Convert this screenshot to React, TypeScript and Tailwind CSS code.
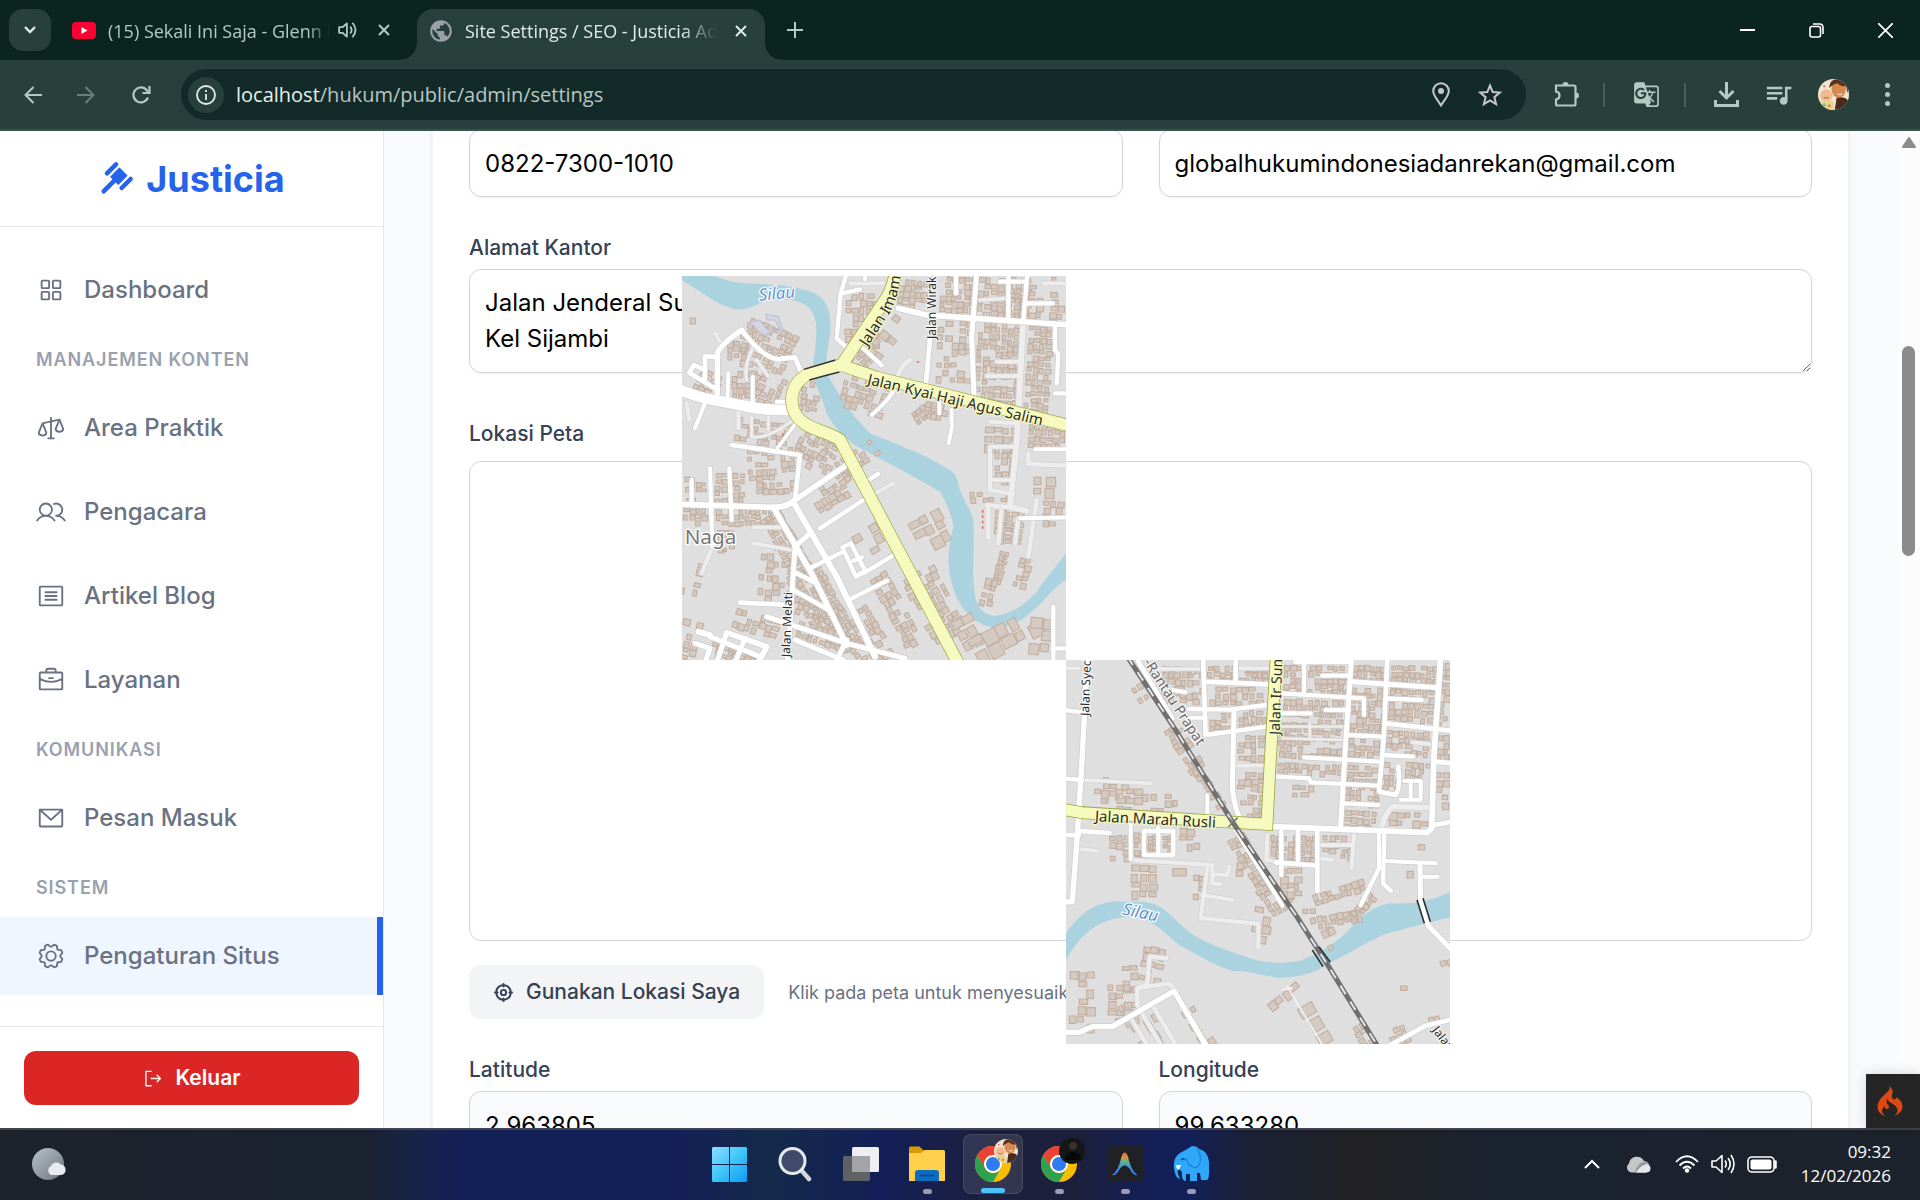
import { useState } from "react";
import type { ReactNode } from "react";
import {
  PiArticle,
  PiBriefcase,
  PiCrosshairBold,
  PiEnvelopeSimple,
  PiGavelFill,
  PiGear,
  PiScales,
  PiSignOut,
  PiSquaresFour,
  PiUsers,
} from "react-icons/pi";
import { SiCodeigniter } from "react-icons/si";
import { MdGTranslate, MdPublic, MdQueueMusic } from "react-icons/md";

const NAV_GROUPS = [
  {
    title: "",
    items: [{ label: "Dashboard", icon: PiSquaresFour, active: false }],
  },
  {
    title: "Manajemen Konten",
    items: [
      { label: "Area Praktik", icon: PiScales, active: false },
      { label: "Pengacara", icon: PiUsers, active: false },
      { label: "Artikel Blog", icon: PiArticle, active: false },
      { label: "Layanan", icon: PiBriefcase, active: false },
    ],
  },
  {
    title: "Komunikasi",
    items: [{ label: "Pesan Masuk", icon: PiEnvelopeSimple, active: false }],
  },
  {
    title: "Sistem",
    items: [{ label: "Pengaturan Situs", icon: PiGear, active: true }],
  },
];

/* ---------- Browser chrome ---------- */

function CloseGlyph({ className }: { className: string }) {
  return (
    <svg viewBox="0 0 12 12" className={className} fill="none" stroke="currentColor" strokeWidth="2">
      <path d="M1 1l10 10M11 1L1 11" />
    </svg>
  );
}

function TabStrip() {
  return (
    <div className="flex h-[60px] shrink-0 items-center bg-[#0a2520] pl-[9px] font-['Open_Sans',sans-serif] text-[18px]">
      <button aria-label="Cari tab" className="flex size-[42px] shrink-0 items-center justify-center rounded-[14px] bg-[#28403b]">
        <svg viewBox="0 0 12 8" className="h-2 w-3" fill="none" stroke="#e3ece9" strokeWidth="2.4">
          <path d="M1 1l5 5 5-5" />
        </svg>
      </button>

      <div className="ml-[21px] flex h-full w-[345px] shrink-0 items-center text-[#b3cac3]">
        <svg viewBox="0 0 24 17" className="h-[17px] w-6 shrink-0">
          <rect width="24" height="17" rx="4" fill="#ff0033" />
          <path d="M9.500 5v7l6-3.500z" fill="#fff" />
        </svg>
        <span className="ml-3 w-[222px] overflow-hidden pt-[2px] whitespace-nowrap [mask-image:linear-gradient(to_right,#000_90%,transparent)]">
          (15) Sekali Ini Saja - Glenn Fredly
        </span>
        <svg viewBox="0 0 18 16" className="ml-2 h-[18px] w-5 shrink-0" fill="none" stroke="currentColor" strokeWidth="1.6">
          <path d="M1 5.500h3L8 2v12L4 10.500H1z" strokeLinejoin="round" />
          <path d="M11 5q2.500 3 0 6M13 1.500q5.500 6.500 0 13" />
        </svg>
        <button aria-label="Tutup tab" className="ml-5">
          <CloseGlyph className="size-3" />
        </button>
      </div>

      <div className="relative mt-[9px] flex h-[51px] w-[348px] shrink-0 items-center rounded-t-[16px] bg-[#28403b] pb-2 text-[#e1ebe8]">
        <span className="absolute bottom-0 -left-4 size-4 bg-[radial-gradient(circle_at_0_0,transparent_15px,#28403b_16px)]" />
        <span className="absolute -right-4 bottom-0 size-4 bg-[radial-gradient(circle_at_100%_0,transparent_15px,#28403b_16px)]" />
        <MdPublic className="ml-[11px] size-[26px] shrink-0 text-[#9aa0a6]" />
        <span className="ml-[11px] w-[252px] overflow-hidden pt-[2px] whitespace-nowrap [mask-image:linear-gradient(to_right,#000_86%,transparent)]">
          Site Settings / SEO - Justicia Admin
        </span>
        <button aria-label="Tutup tab" className="ml-[18px]">
          <CloseGlyph className="size-3" />
        </button>
      </div>

      <button aria-label="Tab baru" className="ml-[22px] text-[#b3cac3]">
        <svg viewBox="0 0 16 16" className="size-4" fill="none" stroke="currentColor" strokeWidth="2">
          <path d="M8 0v16M0 8h16" />
        </svg>
      </button>

      <div className="ml-auto flex text-white">
        <button aria-label="Minimalkan" className="flex w-[69px] justify-center">
          <svg viewBox="0 0 15 15" className="size-[15px]" fill="none" stroke="currentColor" strokeWidth="2">
            <path d="M0 7h15" />
          </svg>
        </button>
        <button aria-label="Pulihkan" className="flex w-[69px] justify-center">
          <svg viewBox="0 0 15 15" className="size-[15px]" fill="none" stroke="currentColor" strokeWidth="1.600">
            <rect x="1" y="3.500" width="10.500" height="10.500" rx="2" />
            <path d="M4 1h6.500Q14 1 14 4.500V11" />
          </svg>
        </button>
        <button aria-label="Tutup" className="flex w-[69px] justify-center">
          <svg viewBox="0 0 15 15" className="size-[15px]" fill="none" stroke="currentColor" strokeWidth="1.700">
            <path d="M0 0l15 15M15 0L0 15" />
          </svg>
        </button>
      </div>
    </div>
  );
}

function ProfilePicture({ className }: { className: string }) {
  return (
    <svg viewBox="0 0 30 30" className={className}>
      <clipPath id="profile">
        <circle cx="15" cy="15" r="15" />
      </clipPath>
      <g clipPath="url(#profile)">
        <rect width="30" height="30" fill="#f3e6cf" />
        <path d="M18 18q10-2 13 6v8H16z" fill="#4a2a1c" />
        <ellipse cx="20" cy="10" rx="7" ry="8" fill="#d8894f" />
        <path d="M11 9q0-10 10-9 10 1 8 14l-2-7q-6 0-8-3-5 1-8 5z" fill="#5b3220" />
        <path d="M17 13q4 3 7 0-2 5-7 0z" fill="#fff" />
        <circle cx="8" cy="16" r="6" fill="#f2b993" />
        <path d="M5.500 17.500q2.500 2 5 0" fill="none" stroke="#a8603f" strokeWidth="1" />
        <path d="M1 22q7-3 14 0l1 9H2z" fill="#e5d58f" />
        <circle cx="6" cy="25" r="1.500" fill="#6fb7a8" />
        <circle cx="11" cy="26" r="1.500" fill="#e08b3c" />
        <circle cx="6" cy="7" r="1" fill="#d55" />
      </g>
    </svg>
  );
}

function Toolbar() {
  return (
    <div className="flex h-[71px] shrink-0 items-center border-b-2 border-[#3a524c] bg-[#28403b] pr-[30px] text-[#b3cac3]">
      <button aria-label="Kembali" className="flex w-[66px] justify-center">
        <svg viewBox="0 0 18 18" className="size-[18px]" fill="none" stroke="currentColor" strokeWidth="2">
          <path d="M18 9H2M9.500 1L1.500 9l8 8" />
        </svg>
      </button>
      <button aria-label="Maju" className="flex w-[40px] justify-center text-[#6b7f79]">
        <svg viewBox="0 0 18 18" className="size-[18px]" fill="none" stroke="currentColor" strokeWidth="2">
          <path d="M0 9h16M8.500 1l8 8-8 8" />
        </svg>
      </button>
      <button aria-label="Muat ulang" className="flex w-[70px] justify-center">
        <svg viewBox="0 0 20 20" className="size-5" fill="none" stroke="currentColor" strokeWidth="2.200">
          <path d="M17 12.500A7.500 7.500 0 1 1 16 5.500L18 8" />
          <path d="M18.500 1v7h-7" />
        </svg>
      </button>

      <div className="ml-[5px] flex h-[51px] flex-1 items-center rounded-full bg-[#132b28] pr-6 pl-[7px]">
        <button aria-label="Informasi situs" className="flex size-9 shrink-0 items-center justify-center rounded-full bg-[#28403b] text-[#e1ebe8]">
          <svg viewBox="0 0 20 20" className="size-5" fill="none" stroke="currentColor" strokeWidth="1.800">
            <circle cx="10" cy="10" r="9" />
            <path d="M10 9v6M10 5v2" />
          </svg>
        </button>
        <span className="ml-3 flex-1 font-['Open_Sans',sans-serif] text-[20px] whitespace-nowrap text-[#b9c6c2]">
          <span className="text-[#e6f0ed]">localhost</span>/hukum/public/admin/settings
        </span>
        <button aria-label="Lokasi" className="text-[#c7c7c7]">
          <svg viewBox="0 0 18 25" className="h-[25px] w-[18px]" fill="none" stroke="currentColor" strokeWidth="2">
            <path d="M9 23.500C5 17 1.200 13.500 1.200 9a7.800 7.800 0 0 1 15.600 0c0 4.500-3.800 8-7.800 14.500z" />
            <circle cx="9" cy="9" r="3" fill="currentColor" stroke="none" />
          </svg>
        </button>
        <button aria-label="Tambahkan bookmark" className="ml-7 text-[#c7c7c7]">
          <svg viewBox="0 0 24 24" className="size-6" fill="none" stroke="currentColor" strokeWidth="2">
            <path d="M12 2.500l2.700 6.600 7.100.5-5.400 4.600 1.700 6.900L12 17.400l-6.100 3.700 1.700-6.900-5.400-4.600 7.100-.5z" />
          </svg>
        </button>
      </div>

      <button aria-label="Ekstensi" className="ml-7">
        <svg viewBox="0 0 25 25" className="size-[25px]" fill="none" stroke="currentColor" strokeWidth="2.200">
          <path d="M2 3.500h18q1.500 0 1.500 1.500v17q0 1.500-1.500 1.500H3.500Q2 23.500 2 22v-4.500q3.500-.5 3.500-4T2 9.500z" />
          <path d="M8.500 3a3 3 0 0 1 6 0zM22 10.500a3 3 0 0 1 0 6z" fill="currentColor" stroke="none" />
        </svg>
      </button>
      <span className="ml-6 h-6 w-[2px] bg-[#47605a]" />
      <button aria-label="Terjemahkan" className="ml-7">
        <MdGTranslate className="size-[27px]" />
      </button>
      <span className="ml-6 h-6 w-[2px] bg-[#47605a]" />
      <button aria-label="Unduhan" className="ml-7">
        <svg viewBox="0 0 25 25" className="size-[25px]" fill="none" stroke="currentColor" strokeWidth="3">
          <path d="M12.500 0v15M5.500 9l7 7 7-7M1.500 18v5.500h22V18" />
        </svg>
      </button>
      <button aria-label="Kontrol media" className="ml-6">
        <MdQueueMusic className="size-[31px]" />
      </button>
      <button aria-label="Profil" className="ml-6">
        <ProfilePicture className="size-[31px]" />
      </button>
      <button aria-label="Menu" className="ml-9 flex flex-col items-center gap-1">
        <span className="size-[5px] rounded-full bg-current" />
        <span className="size-[5px] rounded-full bg-current" />
        <span className="size-[5px] rounded-full bg-current" />
      </button>
    </div>
  );
}

/* ---------- Sidebar ---------- */

function Sidebar() {
  return (
    <aside className="flex w-96 shrink-0 flex-col border-r border-gray-200 bg-white">
      <a href="#" className="flex h-24 shrink-0 items-center justify-center border-b border-gray-200 text-[36px] font-bold text-[#2563eb]">
        <PiGavelFill className="mr-3 size-9" />
        Justicia
      </a>

      <nav className="flex flex-1 flex-col gap-[6px] pt-6">
        {NAV_GROUPS.map((group) => (
          <div key={group.title} className="flex flex-col gap-[6px]">
            {group.title && (
              <div className="flex h-12 items-center px-9 text-[18px] font-semibold tracking-wider text-gray-400 uppercase">
                {group.title}
              </div>
            )}
            {group.items.map((item) => {
              const Icon = item.icon;
              return (
                <a
                  key={item.label}
                  href="#"
                  className={
                    item.active
                      ? "flex h-[78px] items-center border-r-6 border-[#2563eb] bg-[#eff6ff] px-9 text-[24px] font-medium text-gray-500"
                      : "flex h-[78px] items-center px-9 text-[24px] font-medium text-gray-500"
                  }
                >
                  <Icon className="mr-[18px] size-[30px]" />
                  {item.label}
                </a>
              );
            })}
          </div>
        ))}
      </nav>

      <div className="border-t border-gray-200 px-6 pt-6 pb-[23px]">
        <button className="flex h-[54px] w-full items-center justify-center gap-3 rounded-xl bg-[#dc2626] text-[21px] font-semibold text-white">
          <PiSignOut className="size-[21px]" />
          Keluar
        </button>
      </div>
    </aside>
  );
}

/* ---------- Map tiles ---------- */

type Road = { d: string; w: number };

// x, y, width, height, rotation, cell size, density
type Cluster = [number, number, number, number, number, number, number];

function seeded(seed: number) {
  let s = seed;
  return () => {
    s = (s * 16807) % 2147483647;
    return s / 2147483647;
  };
}

// Rows of small footprints that fill a block between streets
function footprints([, , w, h, , cell, density]: Cluster, seed: number) {
  const rand = seeded(seed * 7919 + 17);
  let d = "";
  for (let y = 0; y < h; y += cell) {
    for (let x = 0; x < w; x += cell) {
      const bw = Math.round(cell * (0.55 + rand() * 0.5));
      const bh = Math.round(cell * (0.5 + rand() * 0.5));
      const ox = Math.round(x + rand() * 5);
      const oy = Math.round(y + rand() * 5);
      if (rand() < density + 0.08) d += `M${ox} ${oy}h${bw}v${bh}h${-bw}z`;
    }
  }
  return d;
}

function Buildings({ clusters }: { clusters: Cluster[] }) {
  return (
    <g fill="#d5cac1" stroke="#c3b0a2" strokeWidth="3.5">
      {clusters.map((c, i) => (
        <path key={i} d={footprints(c, i + 1)} transform={`translate(${c[0]} ${c[1]}) rotate(${c[4]})`} />
      ))}
    </g>
  );
}

function Roads({ roads, casing, fill }: { roads: Road[]; casing: string; fill: string }) {
  return (
    <g fill="none" strokeLinecap="round" strokeLinejoin="round">
      {roads.map((r) => (
        <path key={r.d} d={r.d} stroke={casing} strokeWidth={r.w + 4} />
      ))}
      {roads.map((r) => (
        <path key={r.d} d={r.d} stroke={fill} strokeWidth={r.w} />
      ))}
    </g>
  );
}

const HALO = { paintOrder: "stroke", strokeLinejoin: "round" } as const;

const NORTH_BUILDINGS: Cluster[] = [
  [215, 140, 150, 120, 22, 19, 0.8],
  [30, 140, 60, 20, 0, 24, 0.4],
  [70, 290, 60, 60, 28, 18, 0.7],
  [155, 300, 60, 90, 0, 18, 0.7],
  [235, 290, 100, 90, 25, 20, 0.6],
  [140, 190, 80, 90, 0, 20, 0.5],
  [495, 70, 100, 150, 0, 21, 0.65],
  [620, 110, 90, 130, 38, 30, 0.5],
  [655, 25, 85, 80, 4, 18, 0.8],
  [780, 20, 95, 100, 2, 18, 0.75],
  [895, 20, 85, 120, 3, 20, 0.8],
  [990, 20, 50, 120, 3, 16, 0.8],
  [1050, 20, 105, 130, 2, 21, 0.5],
  [775, 150, 90, 180, 3, 21, 0.6],
  [895, 150, 120, 110, 3, 18, 0.65],
  [890, 270, 120, 150, 3, 19, 0.7],
  [1045, 165, 70, 270, 3, 18, 0.75],
  [530, 210, 80, 60, 40, 16, 0.8],
  [500, 310, 130, 90, 18, 20, 0.65],
  [690, 430, 50, 40, -35, 16, 0.8],
  [740, 390, 70, 50, 12, 18, 0.7],
  [370, 330, 40, 90, 10, 18, 0.6],
  [385, 465, 100, 50, 27, 18, 0.7],
  [360, 500, 120, 60, 27, 18, 0.6],
  [170, 440, 150, 60, 8, 18, 0.6],
  [200, 540, 140, 130, -4, 20, 0.6],
  [15, 620, 60, 70, 0, 16, 0.6],
  [105, 610, 85, 80, 0, 18, 0.8],
  [10, 715, 70, 50, 0, 18, 0.6],
  [108, 718, 160, 45, 0, 17, 0.75],
  [110, 780, 50, 60, 0, 18, 0.7],
  [20, 850, 60, 120, 12, 20, 0.4],
  [240, 850, 90, 130, 3, 21, 0.6],
  [300, 715, 200, 55, 60, 18, 0.85],
  [400, 700, 90, 40, -32, 22, 0.7],
  [410, 650, 120, 40, -33, 20, 0.75],
  [460, 580, 130, 40, -33, 19, 0.7],
  [420, 880, 260, 60, 62, 17, 0.85],
  [350, 900, 200, 44, 60, 17, 0.7],
  [560, 1000, 170, 110, 60, 19, 0.6],
  [620, 900, 230, 60, 62, 20, 0.7],
  [510, 800, 90, 70, -30, 30, 0.6],
  [680, 760, 90, 90, -28, 36, 0.7],
  [760, 880, 200, 90, 62, 22, 0.75],
  [810, 1060, 60, 70, -28, 34, 0.8],
  [860, 1110, 220, 60, -27, 44, 0.85],
  [1050, 1040, 60, 110, 5, 38, 0.8],
  [915, 470, 90, 60, 2, 26, 0.8],
  [945, 545, 60, 90, 2, 20, 0.8],
  [1045, 460, 100, 70, 2, 19, 0.8],
  [1060, 620, 40, 60, 0, 34, 0.9],
  [870, 665, 110, 30, 0, 18, 0.5],
  [945, 720, 70, 90, 3, 17, 0.8],
  [960, 840, 25, 90, 15, 14, 0.9],
  [915, 920, 40, 70, 14, 22, 0.9],
  [1020, 860, 20, 90, 14, 18, 0.7],
  [1090, 690, 60, 70, 3, 20, 0.6],
  [170, 1010, 140, 60, 18, 20, 0.6],
  [360, 980, 110, 40, 18, 18, 0.7],
  [360, 1050, 130, 50, 18, 18, 0.7],
  [10, 1040, 60, 120, 15, 22, 0.4],
  [100, 1110, 140, 50, 16, 17, 0.7],
];

const NORTH_LANES: Road[] = [
  { d: "M650 335Q660 285 690 270", w: 14 },
  { d: "M1030 150L1010 520L990 710L1040 722", w: 17 },
  { d: "M950 275H1020M920 318H1020M930 455L1010 460", w: 12 },
  { d: "M1005 530H930V660L1000 672M935 630H1000", w: 12 },
  { d: "M920 705L990 712M925 710V805M965 720L955 820M1005 820L1015 745", w: 13 },
  { d: "M1070 690L1045 860M1045 550V582L1158 587", w: 13 },
  { d: "M550 690L640 640M220 772H320M220 820L335 840", w: 11 },
  { d: "M97 830L65 910M20 400L28 450M175 420V475", w: 12 },
  { d: "M215 440V500Q260 510 340 450M265 430V480", w: 9 },
  { d: "M220 230Q190 290 200 330M230 270L265 320", w: 10 },
  { d: "M510 40H610M900 90L980 85M1090 40H1158M105 190L120 215", w: 11 },
];

const NORTH_ROADS: Road[] = [
  { d: "M0 360C60 385 100 390 180 405C240 420 280 420 345 420", w: 32 },
  { d: "M0 703L280 712Q320 712 345 690L500 585", w: 17 },
  { d: "M345 690L360 555L155 525", w: 14 },
  { d: "M112 370V250Q120 225 185 180", w: 16 },
  { d: "M112 360L28 308L42 285L75 300M75 330V258L115 262", w: 14 },
  { d: "M185 180Q240 255 290 268L345 262L365 310", w: 14 },
  { d: "M145 310L142 390M218 320V400M75 400L45 475M290 395H330", w: 12 },
  { d: "M500 10L482 70L470 205L500 232M485 70L540 58M555 10V28", w: 13 },
  { d: "M550 235L605 286", w: 13 },
  { d: "M655 115L740 135L1168 165", w: 17 },
  { d: "M750 205L738 340M828 10V70", w: 14 },
  { d: "M890 10L875 200L882 380", w: 15 },
  { d: "M985 10V140M1042 10L1030 150M960 35H1040M1040 100H1118", w: 13 },
  { d: "M1125 165V240L1135 252L1130 340M1125 370H1168", w: 13 },
  { d: "M778 400V430M815 420V475L806 520", w: 12 },
  { d: "M575 435Q640 380 650 340", w: 12 },
  { d: "M1065 538H1168M1020 745L1168 742", w: 12 },
  { d: "M35 630V700M90 595L97 830M148 595L155 750", w: 13 },
  { d: "M280 712L400 920L500 1125", w: 17 },
  { d: "M345 705L470 920L585 1160", w: 18 },
  { d: "M345 830L390 790M345 830L322 1178", w: 15 },
  { d: "M385 897L490 845M487 832L512 820L556 902L528 920ZM520 872L545 862", w: 13 },
  { d: "M550 910L642 855M505 990L622 932M420 775L550 690M550 640L594 612", w: 13 },
  { d: "M340 905L410 940M340 960L450 1022M180 998L330 1005", w: 14 },
  { d: "M260 1040L500 1120L675 1165M345 1110L490 1170M470 1170L500 1110", w: 15 },
  { d: "M355 450L292 535", w: 10 },
  { d: "M55 1085L90 1095M140 1088L260 1130L235 1178", w: 17 },
  { d: "M45 1120L90 1135L75 1178M140 1088L110 1178M195 1105L165 1178M90 1100L240 1160", w: 15 },
  { d: "M1120 1010V1178M1120 1135H1168", w: 13 },
];

const NORTH_HIGHWAYS: Road[] = [
  { d: "M650 -10Q640 60 612 95L485 285Q430 300 385 312C330 340 325 400 350 438C380 480 450 485 480 510L840 1190", w: 35 },
  { d: "M485 286L590 322L1180 470", w: 34 },
];

function NorthTile() {
  return (
    <svg viewBox="6 18 1152 1152" className="absolute top-[-186px] left-[212px] size-96 bg-[#dfdfdf] font-['Noto_Sans',sans-serif]">
      <path
        fill="#aad3df"
        d="M6 18H105Q150 40 240 42C300 45 360 52 400 68C440 85 450 120 452 170C450 210 435 260 440 310C470 360 500 420 570 490C640 520 730 550 800 595Q825 605 832 630C840 680 870 710 880 750C884 830 876 900 882 950C885 1010 910 1035 945 1038C1000 1030 1040 1000 1070 965C1100 920 1130 890 1158 850V930C1120 950 1090 1000 1060 1020C1020 1060 980 1072 940 1072C880 1065 840 1010 825 970C800 900 800 850 820 770C815 730 795 690 780 665C720 630 620 575 550 540C500 515 460 470 440 430C430 390 400 340 396 300C400 270 412 220 408 160C400 110 370 95 330 90Q280 88 245 95Q210 120 165 118C110 105 60 62 6 30Z"
      />
      <Buildings clusters={NORTH_BUILDINGS} />
      <path d="M200 160L240 150L262 180L300 178L285 150L260 150L258 132L295 140L310 185L290 178L255 195L235 185L220 165Z" fill="#d3d5e4" stroke="#b9bccf" strokeWidth="3" />
      <path d="M710 276H724M308 490V498M908 720V782" stroke="#f06a60" strokeWidth="5" strokeDasharray="8 8" />
      <Roads roads={NORTH_LANES} casing="#d2d2d2" fill="#ededed" />
      <Roads roads={NORTH_ROADS} casing="#cdcdcd" fill="#ffffff" />
      <Roads roads={NORTH_HIGHWAYS} casing="#9ba63f" fill="#f7fabf" />
      <path d="M372 298Q420 284 466 270M388 330Q430 318 478 306" fill="none" stroke="#333" strokeWidth="4" />
      <path id="jalan-imam" d="M562 232L632 125Q662 60 662 0" fill="none" />
      <path id="jalan-kyai" d="M560 342L1120 476" fill="none" />
      <g fill="#2c2c2c" stroke="#ffffffaa" strokeWidth="7" style={HALO}>
        <text fontSize="45" stroke="#f7fabf">
          <textPath href="#jalan-imam">Jalan Imam</textPath>
        </text>
        <text fontSize="45" stroke="#f7fabf">
          <textPath href="#jalan-kyai">Jalan Kyai Haji Agus Salim</textPath>
        </text>
        <text fontSize="36" transform="translate(768 207) rotate(-90)">Jalan Wirak</text>
        <text fontSize="36" transform="translate(330 1162) rotate(-88)">Jalan Melati</text>
      </g>
      <text x="14" y="823" fontSize="62" fill="#777" stroke="#fff" strokeWidth="8" style={HALO}>
        Naga
      </text>
      <text fontSize="50" fontStyle="italic" fill="#5f92cc" stroke="#fff" strokeWidth="7" style={HALO} transform="translate(238 92) rotate(-5)">
        Silau
      </text>
    </svg>
  );
}

const SOUTH_BUILDINGS: Cluster[] = [
  [300, 30, 115, 110, 4, 19, 0.65],
  [205, 100, 40, 40, -30, 18, 0.7],
  [435, 30, 80, 45, 2, 18, 0.7],
  [530, 30, 85, 45, 2, 18, 0.7],
  [440, 95, 160, 55, 0, 20, 0.7],
  [440, 175, 65, 50, 0, 18, 0.75],
  [525, 170, 85, 45, -3, 18, 0.75],
  [525, 240, 80, 85, 0, 20, 0.75],
  [525, 350, 75, 60, 0, 20, 0.75],
  [535, 420, 60, 60, 0, 18, 0.7],
  [350, 200, 160, 36, 58, 17, 0.7],
  [420, 330, 130, 30, 58, 18, 0.7],
  [665, 30, 55, 80, 2, 18, 0.85],
  [740, 30, 115, 80, 2, 18, 0.8],
  [665, 130, 180, 40, 2, 18, 0.8],
  [870, 30, 100, 45, 2, 17, 0.85],
  [985, 30, 140, 60, 2, 18, 0.75],
  [870, 95, 95, 140, 3, 18, 0.8],
  [980, 100, 135, 100, 3, 20, 0.75],
  [650, 200, 85, 60, 2, 18, 0.7],
  [750, 190, 95, 60, 2, 18, 0.6],
  [650, 270, 190, 35, 3, 19, 0.75],
  [645, 320, 190, 35, 3, 18, 0.75],
  [860, 250, 90, 60, 3, 18, 0.8],
  [855, 330, 90, 55, 3, 18, 0.75],
  [690, 390, 60, 25, 0, 22, 0.7],
  [845, 400, 100, 45, 3, 18, 0.75],
  [845, 465, 90, 45, 3, 20, 0.75],
  [970, 225, 130, 70, 3, 19, 0.75],
  [965, 320, 40, 80, 3, 18, 0.7],
  [1030, 320, 75, 50, 3, 19, 0.7],
  [980, 470, 120, 45, 2, 24, 0.6],
  [1125, 240, 40, 75, 3, 19, 0.7],
  [1120, 350, 40, 120, 3, 22, 0.5],
  [1130, 20, 35, 200, 3, 20, 0.7],
  [120, 365, 60, 60, 0, 19, 0.6],
  [160, 400, 80, 60, 0, 27, 0.8],
  [240, 415, 90, 50, 0, 22, 0.5],
  [70, 400, 60, 60, 3, 24, 0.3],
  [140, 540, 60, 70, 0, 21, 0.7],
  [215, 530, 30, 80, 0, 18, 0.8],
  [255, 540, 24, 50, 0, 14, 0.8],
  [300, 540, 24, 50, 0, 14, 0.8],
  [350, 520, 60, 80, 0, 22, 0.7],
  [205, 630, 60, 90, 0, 26, 0.9],
  [330, 640, 34, 40, 0, 42, 1],
  [390, 660, 20, 90, 0, 18, 0.6],
  [545, 530, 260, 40, 60, 19, 0.8],
  [625, 540, 75, 75, 3, 17, 0.85],
  [715, 540, 45, 75, 3, 16, 0.85],
  [780, 540, 90, 70, 2, 19, 0.65],
  [750, 720, 160, 28, -18, 20, 0.8],
  [740, 790, 150, 24, -12, 20, 0.85],
  [720, 760, 40, 20, 0, 20, 0.8],
  [770, 830, 40, 60, -25, 24, 0.7],
  [650, 640, 50, 110, 0, 22, 0.7],
  [850, 790, 100, 20, -52, 18, 0.7],
  [1030, 645, 20, 20, 0, 22, 1],
  [1065, 565, 20, 20, 0, 22, 1],
  [580, 750, 60, 90, 10, 28, 0.4],
  [520, 620, 40, 40, 0, 22, 0.4],
  [245, 870, 45, 90, 10, 22, 0.5],
  [180, 930, 40, 130, 0, 22, 0.5],
  [20, 950, 60, 170, 0, 26, 0.4],
  [135, 990, 90, 100, 0, 24, 0.5],
  [240, 1010, 160, 90, 58, 24, 0.5],
  [370, 1010, 160, 30, 58, 22, 0.6],
  [590, 1070, 120, 28, -40, 28, 0.6],
  [745, 1035, 130, 50, 60, 50, 1],
  [890, 1080, 110, 30, 58, 20, 0.7],
  [970, 1130, 60, 50, -25, 20, 0.8],
  [1050, 1100, 110, 20, -15, 22, 0.5],
  [1130, 920, 40, 20, -20, 20, 0.8],
  [1015, 990, 20, 20, 0, 22, 1],
];

const SOUTH_LANES: Road[] = [
  { d: "M60 375L265 385M35 580L105 588M0 40H50", w: 11 },
  { d: "M205 615L450 630V685L475 688M435 640L415 790L588 806V880M420 720L510 735M450 658L495 660L502 635", w: 12 },
  { d: "M520 332H605M260 42H420M1050 262L1110 268M530 40H615", w: 11 },
  { d: "M742 200V250M660 215H840M660 250L840 255", w: 7 },
  { d: "M1100 458L990 455Q955 490 952 560", w: 16 },
  { d: "M615 540L612 615L650 622M775 570H870M875 540L868 640M770 610L810 615", w: 12 },
  { d: "M225 1000L255 988L262 905L312 910M225 1000L320 985L345 1010M225 1000V1050L300 1178M270 1050L345 1178M205 1090L260 1178", w: 13 },
];

const SOUTH_ROADS: Road[] = [
  { d: "M75 5L60 300L45 540L30 740L0 742", w: 16 },
  { d: "M0 165L60 172M0 370L60 375M0 540H50M50 528L142 534", w: 13 },
  { d: "M205 510V612M435 420V480M330 105L370 112M380 188H430", w: 12 },
  { d: "M245 528H333V600H245ZM288 518V600", w: 13 },
  { d: "M422 5L430 240M430 80L615 88M520 5V80", w: 14 },
  { d: "M380 162L500 164L615 150M430 240L615 215", w: 13 },
  { d: "M515 168L510 400Q515 450 530 485", w: 15 },
  { d: "M228 20L330 190", w: 14 },
  { d: "M520 525L660 752", w: 12 },
  { d: "M700 20H860M868 5L850 260L835 515", w: 15 },
  { d: "M655 115L905 130V180M725 25V110M780 62H860M790 165H860M655 175H745", w: 13 },
  { d: "M870 80L1130 98", w: 15 },
  { d: "M725 307L950 320M855 240L960 245M970 130L1078 135M965 300L1053 305", w: 13 },
  { d: "M975 5L965 240L950 410L1000 420Q1015 400 1008 335", w: 14 },
  { d: "M970 205L1173 228M1115 320L1173 325M1115 510L1173 500", w: 14 },
  { d: "M1135 5L1115 300L1108 520L1095 533L632 515", w: 17 },
  { d: "M645 365L740 370L745 382L945 392M840 445L948 450", w: 13 },
  { d: "M1025 378H1075V434H1015M1045 380V430", w: 12 },
  { d: "M950 540V640L895 750M966 540L962 685L986 708", w: 13 },
  { d: "M970 618L1120 625M1080 665H1126", w: 12 },
  { d: "M1073 630L1075 735L1098 812L1173 890", w: 15 },
  { d: "M657 530V660M765 530V708M707 530V615M640 622L765 632", w: 14 },
  { d: "M0 1132H50L90 1115L150 1115L335 1008L435 1178", w: 16 },
  { d: "M970 1178L1090 1112L1173 1092", w: 14 },
];

function SouthTile() {
  return (
    <svg viewBox="11 15 1152 1152" className="absolute top-[198px] left-[596px] size-96 bg-[#dfdfdf] font-['Noto_Sans',sans-serif]">
      <path
        fill="#aad3df"
        d="M11 835C60 760 120 735 180 740C240 738 270 740 300 760C340 790 370 830 410 850C470 880 520 895 570 912C620 925 670 928 720 915C770 895 810 870 850 835C890 790 930 755 980 745C1060 748 1100 740 1163 712V787C1110 800 1030 820 960 840C910 865 860 895 800 925C750 960 700 968 650 968C600 962 550 945 510 948C450 930 400 895 350 870C300 825 260 785 200 785C110 790 60 830 11 915Z"
      />
      <Buildings clusters={SOUTH_BUILDINGS} />
      <Roads roads={SOUTH_LANES} casing="#d2d2d2" fill="#ededed" />
      <Roads roads={SOUTH_ROADS} casing="#cdcdcd" fill="#ffffff" />
      <path d="M660 1005L690 1000L675 995L780 1170" fill="none" stroke="#f4f4f4" strokeWidth="5" />
      <g fill="none" strokeLinejoin="miter">
        <path d="M0 463L60 473L614 508L622 350L642 0" stroke="#9ba63f" strokeWidth="38" />
        <path d="M0 463L60 473L614 508L622 350L642 0" stroke="#f7fabf" strokeWidth="33" />
      </g>
      <path d="M195 5L340 225L510 500L700 780L790 920L945 1172" fill="none" stroke="#707070" strokeWidth="15" />
      <path d="M195 5L340 225L510 500L700 780L790 920L945 1172" fill="none" stroke="#e4e4e4" strokeWidth="6" strokeDasharray="30 26" />
      <path d="M498 488L526 516M526 488L498 516" stroke="#777" strokeWidth="5" />
      <path d="M750 885L782 935M770 875L804 922M1064 735L1086 805M1082 730L1104 800" stroke="#333" strokeWidth="5" />
      <g fill="#2c2c2c" stroke="#ffffffaa" strokeWidth="7" style={HALO}>
        <text fontSize="36" transform="translate(80 183) rotate(-88)">Jalan Syech</text>
        <text fontSize="43" stroke="#f7fabf" transform="translate(652 240) rotate(-88)">Jalan Ir Sumantri</text>
        <text fontSize="45" stroke="#f7fabf" transform="translate(97 499) rotate(3)">Jalan Marah Rusli</text>
        <text fontSize="43" fill="#6b6b6b" transform="translate(242 22) rotate(57)">-Rantau Prapat</text>
        <text fontSize="36" transform="translate(1108 1126) rotate(52)">Jalan</text>
      </g>
      <text fontSize="50" fontStyle="italic" fill="#5f92cc" stroke="#fff" strokeWidth="7" style={HALO} transform="translate(178 778) rotate(12)">
        Silau
      </text>
    </svg>
  );
}

/* ---------- Settings form ---------- */

function Field({ id, label, children }: { id: string; label: string; children: ReactNode }) {
  return (
    <div className="flex flex-col gap-[6px]">
      <label htmlFor={id} className="text-[21px] leading-[30px] font-medium text-gray-700">
        {label}
      </label>
      {children}
    </div>
  );
}

const INPUT = "h-[68px] w-full rounded-xl border border-gray-300 px-[15px] text-[24px] text-black shadow-xs";

function SettingsForm() {
  const [phone, setPhone] = useState("0822-7300-1010");
  const [email, setEmail] = useState("globalhukumindonesiadanrekan@gmail.com");
  const [address, setAddress] = useState("Jalan Jenderal Sudirman\nKel Sijambi");

  return (
    <form className="-mt-[3px] flex flex-col gap-9 border border-gray-100 bg-white px-9 shadow-sm">
      <div className="grid grid-cols-2 gap-9">
        <input aria-label="Telepon" className={INPUT} value={phone} onChange={(e) => setPhone(e.target.value)} />
        <input aria-label="Email" type="email" className={INPUT} value={email} onChange={(e) => setEmail(e.target.value)} />
      </div>

      <Field id="address" label="Alamat Kantor">
        <textarea
          id="address"
          rows={2}
          className="w-full resize-y overflow-hidden rounded-xl border border-gray-300 p-[15px] text-[24px] leading-9 text-black shadow-xs"
          value={address}
          onChange={(e) => setAddress(e.target.value)}
        />
      </Field>

      <div className="flex flex-col pt-[10px]">
        <h3 className="text-[21px] leading-[30px] font-medium text-gray-700">Lokasi Peta</h3>
        <div className="relative mt-3 h-[480px] rounded-xl border border-gray-300">
          <NorthTile />
          <SouthTile />
        </div>
        <div className="mt-6 flex items-center gap-6">
          <button type="button" className="flex h-[54px] shrink-0 items-center gap-3 rounded-xl bg-gray-100 px-6 text-[21px] font-medium text-gray-700">
            <PiCrosshairBold className="size-[21px]" />
            Gunakan Lokasi Saya
          </button>
          <p className="flex-1 overflow-hidden text-[18px] whitespace-nowrap text-gray-500">
            Klik pada peta untuk menyesuaikan titik lokasi.
          </p>
        </div>
      </div>

      <div className="grid grid-cols-2 gap-9">
        <Field id="latitude" label="Latitude">
          <input id="latitude" readOnly className={`${INPUT} bg-gray-50`} value="2.963805" />
        </Field>
        <Field id="longitude" label="Longitude">
          <input id="longitude" readOnly className={`${INPUT} bg-gray-50`} value="99.633280" />
        </Field>
      </div>
    </form>
  );
}

function Scrollbar() {
  return (
    <div className="flex w-[23px] shrink-0 flex-col items-center bg-[#fcfcfc] pt-[6px]">
      <svg viewBox="0 0 14 11" className="h-[11px] w-[14px]">
        <path d="M7 1L13 10H1z" fill="#8b8b8b" stroke="#8b8b8b" strokeWidth="2" strokeLinejoin="round" />
      </svg>
      <div className="mt-[198px] h-[210px] w-[13px] rounded-full bg-[#8b8b8b]" />
    </div>
  );
}

/* ---------- Taskbar ---------- */

function ChromeLogo() {
  return (
    <svg viewBox="0 0 36 36" className="size-9">
      <circle cx="18" cy="18" r="18" fill="#fbbc05" />
      <path d="M18 36A18 18 0 0 1 2.400 9L10.200 22.500A9 9 0 0 0 25.800 22.500z" fill="#2ea24f" />
      <path d="M2.400 9A18 18 0 0 1 33.600 9H18A9 9 0 0 0 10.200 22.500z" fill="#ea4335" />
      <circle cx="18" cy="18" r="9" fill="#fff" />
      <circle cx="18" cy="18" r="7" fill="#2f7bf0" />
    </svg>
  );
}

function TaskButton({ label, state, children }: { label: string; state?: "open" | "active"; children: ReactNode }) {
  return (
    <button
      aria-label={label}
      className={
        state === "active"
          ? "relative flex size-[60px] items-center justify-center rounded-lg border border-white/10 bg-white/10"
          : "relative flex size-[60px] items-center justify-center"
      }
    >
      {children}
      {state === "open" && <span className="absolute bottom-0 h-[5px] w-[9px] rounded-full bg-[#9a9db3]" />}
      {state === "active" && <span className="absolute bottom-0 h-[5px] w-6 rounded-full bg-[#4cc2ff]" />}
    </button>
  );
}

function Taskbar() {
  return (
    <footer className="grid h-[72px] shrink-0 grid-cols-[1fr_auto_1fr] items-center border-t-2 border-[#3f4450] bg-[linear-gradient(90deg,#1d222b_0%,#1a212f_19%,#16244a_22%,#131f57_24%,#131f57_35%,#142a4a_40%,#131f57_46%,#1d203c_52%,#1d203c_56%,#131f57_60%,#131f57_62%,#1b2036_65%,#212022_71%,#1a222f_78%,#1d222b_100%)] pb-[2px]">
      <button aria-label="Cuaca" className="ml-8 w-9">
        <svg viewBox="0 0 36 34" className="h-[34px] w-9">
          <defs>
            <linearGradient id="moon" x1="0" y1="0" x2="1" y2="1">
              <stop offset="0" stopColor="#b9c2ca" />
              <stop offset="1" stopColor="#6d757d" />
            </linearGradient>
          </defs>
          <circle cx="16" cy="17" r="16" fill="url(#moon)" />
          <path d="M19 28a5 5 0 0 1 0-9 6 6 0 0 1 10-1.500A5.300 5.300 0 0 1 29 28z" fill="#e7eaee" />
        </svg>
      </button>

      <div className="flex gap-[6px]">
        <TaskButton label="Mulai">
          <svg viewBox="0 0 35 35" className="size-[35px]">
            <defs>
              <linearGradient id="win" x1="0" y1="0" x2="1" y2="1">
                <stop offset="0" stopColor="#8be0ff" />
                <stop offset="0.500" stopColor="#3fc6fb" />
                <stop offset="1" stopColor="#0c9bf5" />
              </linearGradient>
            </defs>
            <path d="M1 0h16v17H0V1zM18 0h16l1 1v16H18zM0 18h17v17H1l-1-1zM18 18h17v16l-1 1H18z" fill="url(#win)" />
          </svg>
        </TaskButton>
        <TaskButton label="Telusuri">
          <svg viewBox="0 0 34 36" className="h-9 w-[34px]">
            <path d="M24 25l7 8" stroke="#d5d8dc" strokeWidth="4.500" strokeLinecap="round" />
            <circle cx="14.500" cy="15" r="12.500" fill="#3f4a6d" stroke="#e6e8eb" strokeWidth="3" />
          </svg>
        </TaskButton>
        <TaskButton label="Tampilan tugas">
          <svg viewBox="0 0 36 36" className="size-9">
            <rect x="0" y="10" width="27" height="25" rx="1.500" fill="#606165" />
            <rect x="9" y="1" width="27" height="25" rx="1.500" fill="#efeff1" />
            <path d="M9 10h18v16H9z" fill="#a3a4a9" />
          </svg>
        </TaskButton>
        <TaskButton label="File Explorer" state="open">
          <svg viewBox="0 0 36 36" className="size-9">
            <path d="M0 2q0-1.500 1.500-1.500h9L14 4v5H0z" fill="#d99a06" />
            <path d="M0 7h12l3-3h19.500Q36 4 36 5.500V35H0z" fill="#ffd04c" />
            <path d="M6 35v-8q0-3 3-3h18q3 0 3 3v8z" fill="#0c6cbd" />
            <path d="M11 29.500h14" stroke="#0a4a86" strokeWidth="1.500" />
          </svg>
        </TaskButton>
        <TaskButton label="Google Chrome" state="active">
          <ChromeLogo />
          <ProfilePicture className="absolute top-1 right-1 size-6" />
        </TaskButton>
        <TaskButton label="Google Chrome (profil kedua)" state="open">
          <ChromeLogo />
          <svg viewBox="0 0 26 26" className="absolute top-1 right-1 size-[26px]">
            <circle cx="13" cy="13" r="13" fill="#131715" />
            <circle cx="14" cy="8" r="4" fill="#38302c" />
            <path d="M6 22q1-8 8-8t8 8z" fill="#070808" />
          </svg>
        </TaskButton>
        <TaskButton label="Antigravity" state="open">
          <svg viewBox="0 0 36 36" className="size-9">
            <defs>
              <linearGradient id="arc" x1="0" y1="0" x2="0" y2="1">
                <stop offset="0" stopColor="#ef6a3d" />
                <stop offset="0.250" stopColor="#c99a4a" />
                <stop offset="0.450" stopColor="#4bb29c" />
                <stop offset="0.700" stopColor="#3f8cf4" />
                <stop offset="1" stopColor="#3b7ef2" />
              </linearGradient>
            </defs>
            <rect width="36" height="36" fill="#202124" />
            <path d="M5 29q6-4 8.500-14.500Q15 6.500 17.700 6.500t4.300 8Q24.500 25 30.500 29q-3.500 1-6.500-4-3-5.500-6.300-5.500T11.500 25Q8.500 30 5 29z" fill="url(#arc)" />
          </svg>
        </TaskButton>
        <TaskButton label="Laragon" state="open">
          <svg viewBox="0 0 36 36" className="size-9">
            <path d="M19 0q5 0 7 3 9 2 10 13v10q0 7-2 8h-6l-1-7h-3v8h-7v-7h-4v7q-5 0-4-9l-3-3q-2 1-1 5l2 5q-4-1-5-6-4-14 5-20 6-3 12-7z" fill="#2fa8fa" />
            <path d="M24 3q6 8 2 16-3 4-6 2-7-3-6-9" fill="none" stroke="#1b86dc" strokeWidth="1.400" />
            <path d="M8 14q2-2.500 4 0" fill="none" stroke="#0d4a80" strokeWidth="1.400" />
            <path d="M3 19h5l-2 5q-3-1-3-5z" fill="#f4f7fa" />
          </svg>
        </TaskButton>
      </div>

      <div className="flex items-center justify-end pr-[29px] text-white">
        <svg viewBox="0 0 16 10" className="mr-[27px] h-[10px] w-4" fill="none" stroke="currentColor" strokeWidth="2">
          <path d="M1 9l7-7 7 7" />
        </svg>
        <svg viewBox="0 0 24 17" className="mr-6 h-[17px] w-6">
          <path d="M5 16.500a5 5 0 0 1-3-9A8 8 0 0 1 17 5a6 6 0 0 1 2 11.500z" fill="#c4c6ca" />
          <path d="M8 16.500q1-8 9-11a5.800 5.800 0 0 1 2 11z" fill="#96999f" />
          <path d="M9 16.500q4-7 11-8.500 4 2 3.500 5-.5 3.500-4.500 3.500z" fill="#e6e7e9" />
        </svg>
        <svg viewBox="0 0 24 18" className="mr-3 h-[18px] w-6" fill="none" stroke="currentColor" strokeWidth="1.800">
          <path d="M1 7q11-11.500 22 0M4.500 10.500q7.500-7.500 15 0M8 13.500q4-4 8 0" />
          <circle cx="12" cy="15.500" r="2.200" fill="currentColor" stroke="none" />
        </svg>
        <svg viewBox="0 0 24 20" className="mr-3 h-5 w-6" fill="none" stroke="currentColor" strokeWidth="1.600">
          <path d="M1 7h4l6-5.500v17L5 13H1z" strokeLinejoin="round" />
          <path d="M14 6.500q2.500 3.500 0 7M17 4q4.500 6 0 12M20 1q6 9 0 18" />
        </svg>
        <svg viewBox="0 0 30 17" className="mr-6 h-[17px] w-[30px]" fill="none" stroke="currentColor" strokeWidth="1.600">
          <rect x="1" y="1" width="26" height="15" rx="4" />
          <rect x="3.500" y="3.500" width="21" height="10" rx="2" fill="currentColor" stroke="none" />
          <path d="M28.500 5.500v6" strokeWidth="2.500" strokeLinecap="round" />
        </svg>
        <div className="text-right font-['Open_Sans',sans-serif] text-[17px] leading-6">
          <div>09:32</div>
          <div>12/02/2026</div>
        </div>
      </div>
    </footer>
  );
}

export default function App() {
  return (
    <div className="flex h-screen flex-col overflow-hidden font-['Inter',sans-serif]">
      <TabStrip />
      <Toolbar />
      <div className="relative flex min-h-0 flex-1 bg-gray-50">
        <Sidebar />
        <main className="min-w-0 flex-1 overflow-hidden px-12">
          <SettingsForm />
        </main>
        <Scrollbar />
        <button
          aria-label="CodeIgniter debug"
          className="absolute right-0 bottom-0 flex size-[54px] items-center justify-center bg-[#252525] pr-[7px] shadow-[0_0_12px_rgba(0,0,0,0.150)]"
        >
          <SiCodeigniter className="size-[30px] text-[#dd4814]" />
        </button>
      </div>
      <Taskbar />
    </div>
  );
}
